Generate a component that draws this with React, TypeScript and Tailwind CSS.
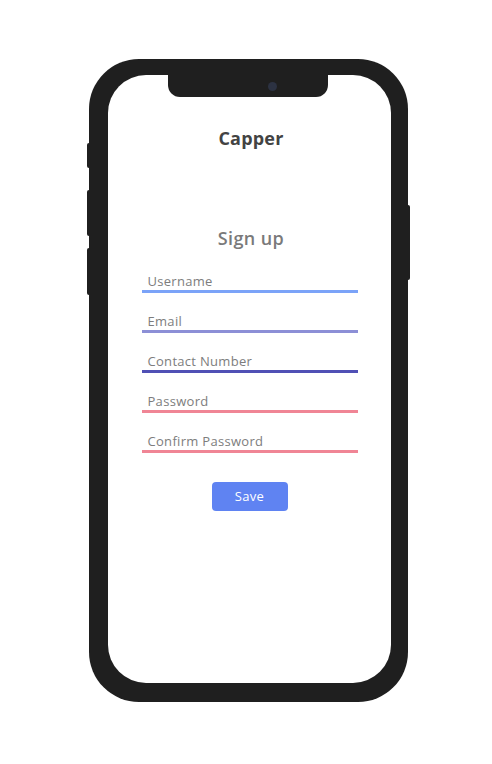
const fields = [
  { label: "Username", line: "bg-[#7ba3f8]" },
  { label: "Email", line: "bg-[#8c8fd6]" },
  { label: "Contact Number", line: "bg-[#5050b5]" },
  { label: "Password", line: "bg-[#f08595]" },
  { label: "Confirm Password", line: "bg-[#f08595]" },
]

const App = () => {
  return (
    <div className="h-[764px] w-[492px] bg-white pt-[59px] font-['Open_Sans',sans-serif]">
      <div className="relative ml-[89px] h-[643px] w-[319px] rounded-[50px] bg-[#1f1f1f] pb-[19px] pl-[19px] pr-[17px] pt-[16px]">
        {/* side buttons */}
        <div className="absolute left-[-2px] top-[84px] h-[25px] w-[2px] rounded-l-sm bg-[#1f1f1f]" />
        <div className="absolute left-[-2px] top-[131px] h-[46px] w-[2px] rounded-l-sm bg-[#1f1f1f]" />
        <div className="absolute left-[-2px] top-[189px] h-[47px] w-[2px] rounded-l-sm bg-[#1f1f1f]" />
        <div className="absolute right-[-2px] top-[146px] h-[75px] w-[2px] rounded-r-sm bg-[#1f1f1f]" />

        {/* screen */}
        <div className="relative h-full w-full overflow-hidden rounded-[38px] bg-white">
          {/* notch */}
          <div className="absolute left-[60px] top-0 flex h-[22px] w-[160px] items-center justify-end rounded-b-[12px] bg-[#1f1f1f] pr-[51px]">
            <div className="h-[9px] w-[9px] rounded-full bg-[#2c3242]" />
          </div>

          <div className="flex flex-col items-center pt-[52px]">
            <h1 className="pl-[3px] text-[18px] font-bold leading-[22px] tracking-[0.2px] text-[#434343]">Capper</h1>
            <h2 className="mt-[78px] pl-[3px] text-[18px] font-semibold leading-[22px] tracking-[0.4px] text-[#7a7a7a]">Sign up</h2>

            <div className="mt-[24px] flex w-[216px] flex-col gap-[20px]">
              {fields.map((f) => (
                <div key={f.label} className="flex flex-col">
                  <span className="pl-[6px] text-[13px] leading-[16px] tracking-[0.3px] text-[#7d7d7d]">{f.label}</span>
                  <div className={`mt-[1px] h-[3px] w-full ${f.line}`} />
                </div>
              ))}
            </div>

            <button className="mt-[29px] h-[29px] w-[76px] rounded-[4px] bg-[#5f83f2] text-[13px] tracking-[0.3px] text-white">
              Save
            </button>
          </div>
        </div>
      </div>
    </div>
  )
}

export default App
